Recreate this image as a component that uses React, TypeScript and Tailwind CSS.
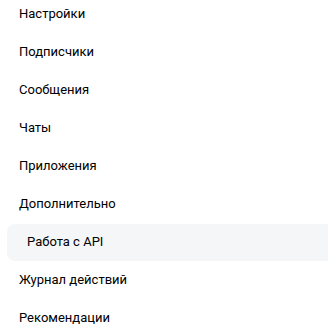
import React from 'react';

const items = [
  'Настройки',
  'Подписчики',
  'Сообщения',
  'Чаты',
  'Приложения',
  'Дополнительно',
  'Работа с API',
  'Журнал действий',
  'Рекомендации',
];

export default function App() {
  const active = 'Работа с API';
  return (
    <div className="w-[328px] h-[335px] overflow-hidden bg-white font-['Roboto',sans-serif] text-[13px] text-[#000000]">
      <div className="flex flex-col -mt-[5px]">
        {items.map((label) =>
          label === active ? (
            <div key={label} className="h-[38px] flex items-center">
              <div className="ml-[7px] -mr-4 flex-1 h-[37px] flex items-center pl-[20px] rounded-lg bg-[#f5f6f8]">
                {label}
              </div>
            </div>
          ) : (
            <div key={label} className="h-[38px] flex items-center pl-[19px]">
              {label}
            </div>
          )
        )}
      </div>
    </div>
  );
}
